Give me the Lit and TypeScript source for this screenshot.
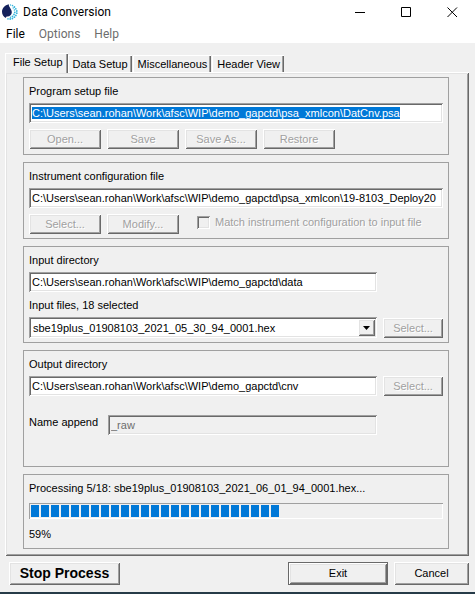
import { LitElement, html, css, svg } from "lit";
import { customElement, query, state } from "lit/decorators.js";

const TABS = ["File Setup", "Data Setup", "Miscellaneous", "Header View"];
const BLOCKS = 25;
const DOTS = [
  [8.5, 1, 0.7], [10.5, 1.6, 0.8], [12.4, 3, 0.9], [13.8, 4.8, 0.9], [14.8, 7, 0.9], [14.8, 9.2, 0.9],
  [13.9, 11.4, 0.9], [12.4, 13.2, 0.9], [10.4, 14.5, 0.9], [8.2, 15, 0.9], [6, 14.9, 0.8],
  [11.2, 4, 0.7], [12.4, 6, 0.8], [12.8, 8.3, 0.9], [12, 10.5, 0.9], [10.4, 12.3, 0.9], [8.4, 13.3, 0.7],
];

@customElement("app-root")
export class AppRoot extends LitElement {
  static styles = css`
    :host {
      display: flex;
      flex-direction: column;
      min-height: 100vh;
      box-sizing: border-box;
      background: #f0f0f0;
      border-bottom: 2px solid #263b48;
      color: #000;
      font: 11px/14px "Liberation Sans", Arial, sans-serif;
    }
    * { box-sizing: border-box; }
    button, input, select { font: inherit; color: inherit; margin: 0; border-radius: 0; }
    .chrome { background: #fff; font: 12px/18px Roboto, "Open Sans", sans-serif; }
    .title { display: flex; align-items: center; height: 24px; padding-left: 2px; }
    .title h1 { flex: 1; margin: 0 0 0 5px; font: inherit; }
    .logo { width: 16px; height: 16px; display: block; }
    .winbtn { width: 46px; height: 24px; padding: 0; border: 0; background: none; display: grid; place-items: center; }
    .winbtn svg { width: 11px; height: 11px; display: block; }
    .menu { display: flex; gap: 14px; height: 19px; padding-left: 6px; }
    .menu button { border: 0; background: none; padding: 0; line-height: 20px; }
    .menu .off { color: #6d6d6d; }

    .tabs { display: flex; align-items: flex-end; height: 20px; margin: 10px 6px 0 5px; }
    .tab {
      height: 18px; padding: 0 4px 0 5px; border: 0; background: #f0f0f0; margin-right: 1px;
      border-bottom: 1px solid #fff;
      box-shadow: inset 1px 1px #fff, inset -1px 0 #696969, inset -2px 0 #a0a0a0;
    }
    .tab.on {
      height: 20px; padding: 0 5px 2px 8px; margin-right: 0; border-bottom: 0; position: relative; z-index: 1;
    }
    .panel {
      display: flex; flex-direction: column; gap: 7px;
      margin: -1px 6px 0 5px; padding: 5px 20px 7px 18px;
      box-shadow: inset 1px 1px #fff, inset -1px -1px #696969, inset 2px 2px #e3e3e3, inset -2px -2px #a0a0a0;
    }
    .group { border: 1px solid #a0a0a0; padding: 6px 5px 5px; display: flex; flex-direction: column; gap: 6px; }
    .field { display: flex; flex-direction: column; gap: 5px; }
    .short { padding-bottom: 4px; }
    .line { display: grid; grid-template-columns: 1fr 60px; gap: 6px; align-items: end; }
    .row { display: flex; gap: 6px; align-items: center; }
    .edit {
      width: 100%; min-width: 0; height: 20px; border: 0; padding: 2px 3px; background: #fff; outline: none;
      box-shadow: inset 1px 1px #a0a0a0, inset -1px -1px #fff, inset 2px 2px #696969, inset -2px -2px #e3e3e3;
    }
    .edit::selection { background: #0078d7; color: #fff; }
    .edit:disabled { background: #f0f0f0; color: #6d6d6d; }
    .combo { position: relative; }
    .combo select { appearance: none; height: 21px; padding-left: 4px; display: block; }
    .arrow {
      position: absolute; top: 2px; right: 2px; width: 17px; bottom: 2px; display: grid; place-items: center;
      background: #f0f0f0; pointer-events: none;
    }
    .arrow svg { width: 7px; height: 4px; display: block; }
    .btn, .arrow {
      box-shadow: inset 1px 1px #fff, inset -1px -1px #696969, inset 2px 2px #e3e3e3, inset -2px -2px #a0a0a0;
    }
    .btn { height: 20px; border: 0; padding: 0; background: #f0f0f0; }
    .group .btn { width: 72px; }
    .group .line .btn { width: 60px; }
    .btn:disabled, .check { color: #a0a0a0; text-shadow: 1px 1px #fff; }
    .check { display: flex; align-items: center; gap: 5px; margin: 0 0 4px 12px; }
    .check input {
      appearance: none; width: 13px; height: 13px; background: #f0f0f0;
      box-shadow: inset 1px 1px #a0a0a0, inset -1px -1px #fff, inset 2px 2px #696969, inset -2px -2px #e3e3e3;
    }
    .output { gap: 19px; padding-bottom: 31px; }
    .append { display: grid; grid-template-columns: 73px 1fr 60px; gap: 6px; align-items: start; }
    .progress { gap: 8px; padding-bottom: 7px; }
    .bar {
      display: flex; gap: 2px; height: 16px; padding: 2px; overflow: hidden;
      box-shadow: inset 1px 1px #a0a0a0, inset -1px -1px #fff;
    }
    .bar span { flex: none; width: 8px; background: #0078d7; }
    .foot { display: flex; gap: 6px; padding: 6px 6px 7px 9px; }
    .foot .btn { height: 23px; width: 75px; padding-bottom: 2px; }
    .foot .stop { width: 111px; font-weight: bold; font-size: 14px; margin-right: auto; }
    .foot .exit { width: 100px; border: 1px solid #696969; }
  `;

  @state() private tab = 0;
  @query("#program") private program!: HTMLInputElement;

  firstUpdated() {
    this.program.focus();
    this.program.select();
  }

  render() {
    return html`
      <header class="chrome">
        <div class="title">
          <svg class="logo" viewBox="0 0 16 16" aria-hidden="true">
            <path fill="#14215c" d="M6.800 .2C6.500 3 9.800 4.800 9.800 8.200C9.800 10.800 7.800 12.400 5.400 12.400C4.300 12.400 3.800 13 4 14C1.500 13 0 10.500 0 7.800C0 4 3 1 6.800 .2Z" />
            ${DOTS.map(([x, y, r]) => svg`<circle cx=${x} cy=${y} r=${r} fill="#36b4dc" />`)}
          </svg>
          <h1>Data Conversion</h1>
          <button class="winbtn" aria-label="Minimize"><svg viewBox="0 0 11 11"><path d="M0 5.500H10" stroke="#000" /></svg></button>
          <button class="winbtn" aria-label="Maximize"><svg viewBox="0 0 11 11"><path d="M.5 .5H9.500V9.500H.5Z" stroke="#000" fill="none" /></svg></button>
          <button class="winbtn" aria-label="Close"><svg viewBox="0 0 11 11"><path d="M.5 .5L10 10M10 .5L.5 10" stroke="#000" /></svg></button>
        </div>
        <nav class="menu">
          <button>File</button><button class="off">Options</button><button class="off">Help</button>
        </nav>
      </header>

      <div class="tabs" role="tablist">
        ${TABS.map((name, i) => html`<button role="tab" class="tab ${i === this.tab ? "on" : ""}"
          aria-selected=${i === this.tab} @click=${() => (this.tab = i)}>${name}</button>`)}
      </div>

      <main class="panel">
        <section class="group">
          <div class="field">
            <label for="program">Program setup file</label>
            <input class="edit" id="program" value="C:\\Users\\sean.rohan\\Work\\afsc\\WIP\\demo_gapctd\\psa_xmlcon\\DatCnv.psa" />
          </div>
          <div class="row">
            ${["Open...", "Save", "Save As...", "Restore"].map((t) => html`<button class="btn" disabled>${t}</button>`)}
          </div>
        </section>

        <section class="group short">
          <div class="field">
            <label for="config">Instrument configuration file</label>
            <input class="edit" id="config" value="C:\\Users\\sean.rohan\\Work\\afsc\\WIP\\demo_gapctd\\psa_xmlcon\\19-8103_Deploy20" />
          </div>
          <div class="row">
            <button class="btn" disabled>Select...</button>
            <button class="btn" disabled>Modify...</button>
            <label class="check"><input type="checkbox" disabled />Match instrument configuration to input file</label>
          </div>
        </section>

        <section class="group short">
          <div class="line">
            <div class="field">
              <label for="indir">Input directory</label>
              <input class="edit" id="indir" value="C:\\Users\\sean.rohan\\Work\\afsc\\WIP\\demo_gapctd\\data" />
            </div>
          </div>
          <div class="line">
            <div class="field">
              <label for="files">Input files, 18 selected</label>
              <div class="combo">
                <select class="edit" id="files"><option>sbe19plus_01908103_2021_05_30_94_0001.hex</option></select>
                <span class="arrow"><svg viewBox="0 0 7 4"><path d="M0 0H7L3.500 4Z" /></svg></span>
              </div>
            </div>
            <button class="btn" disabled>Select...</button>
          </div>
        </section>

        <section class="group output">
          <div class="line">
            <div class="field">
              <label for="outdir">Output directory</label>
              <input class="edit" id="outdir" value="C:\\Users\\sean.rohan\\Work\\afsc\\WIP\\demo_gapctd\\cnv" />
            </div>
            <button class="btn" disabled>Select...</button>
          </div>
          <div class="append">
            <label for="append">Name append</label>
            <input class="edit" id="append" value="_raw" disabled />
          </div>
        </section>

        <section class="group progress">
          <div>Processing 5/18: sbe19plus_01908103_2021_06_01_94_0001.hex...</div>
          <div class="bar" role="progressbar" aria-label="Processing" aria-valuenow="59" aria-valuemin="0" aria-valuemax="100">
            ${Array.from({ length: BLOCKS }, () => html`<span></span>`)}
          </div>
          <div>59%</div>
        </section>
      </main>

      <footer class="foot">
        <button class="btn stop">Stop Process</button>
        <button class="btn exit">Exit</button>
        <button class="btn">Cancel</button>
      </footer>
    `;
  }
}
